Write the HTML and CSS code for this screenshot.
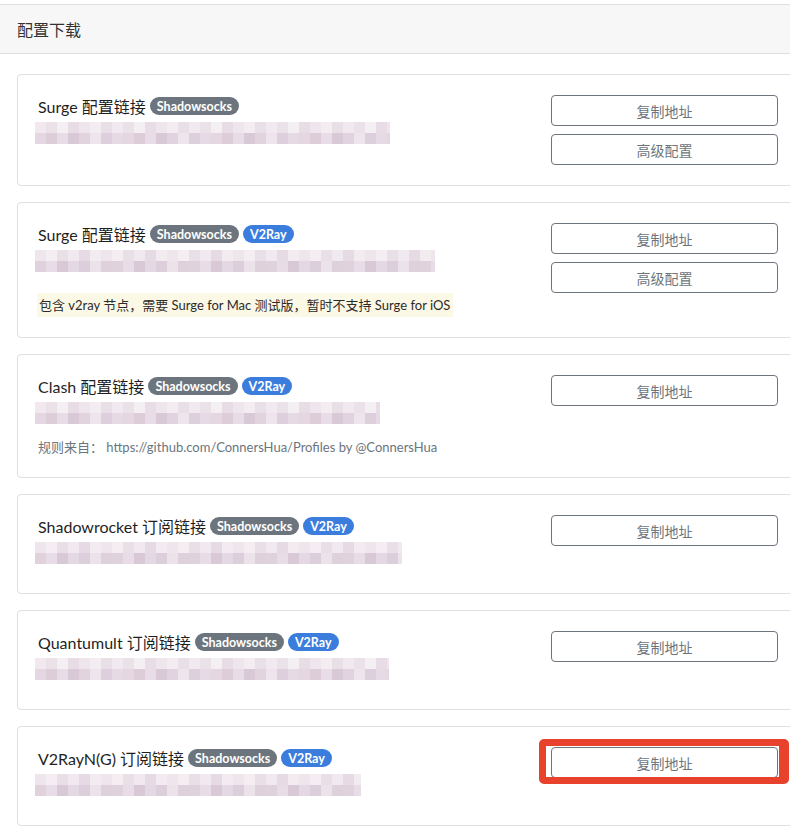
FILE: index.html
```html
<!DOCTYPE html>
<html lang="zh-CN">
<head>
<meta charset="utf-8">
<title>配置下载</title>
<link rel="stylesheet" href="styles.css">
</head>
<body>
<div class="panel">
  <div class="panel-head">配置下载</div>
  <div class="panel-body">

    <div class="card">
      <div class="card-main">
        <div class="title">Surge 配置链接 <span class="badge badge-ss">Shadowsocks</span></div>
        <div class="blur blur-a w355"></div>
      </div>
      <div class="card-actions">
        <button class="btn">复制地址</button>
        <button class="btn">高级配置</button>
      </div>
    </div>

    <div class="card">
      <div class="card-main">
        <div class="title">Surge 配置链接 <span class="badge badge-ss">Shadowsocks</span><span class="badge badge-v2">V2Ray</span></div>
        <div class="blur blur-b w400"></div>
        <div class="note-warn">包含 v2ray 节点，需要 Surge for Mac 测试版，暂时不支持 Surge for iOS</div>
      </div>
      <div class="card-actions">
        <button class="btn">复制地址</button>
        <button class="btn">高级配置</button>
      </div>
    </div>

    <div class="card">
      <div class="card-main">
        <div class="title">Clash 配置链接 <span class="badge badge-ss">Shadowsocks</span><span class="badge badge-v2">V2Ray</span></div>
        <div class="blur blur-a w345"></div>
        <div class="note-muted">规则来自：&nbsp;https://github.com/ConnersHua/Profiles by @ConnersHua</div>
      </div>
      <div class="card-actions">
        <button class="btn">复制地址</button>
      </div>
    </div>

    <div class="card">
      <div class="card-main">
        <div class="title">Shadowrocket 订阅链接 <span class="badge badge-ss">Shadowsocks</span><span class="badge badge-v2">V2Ray</span></div>
        <div class="blur blur-b w367"></div>
      </div>
      <div class="card-actions">
        <button class="btn">复制地址</button>
      </div>
    </div>

    <div class="card">
      <div class="card-main">
        <div class="title">Quantumult 订阅链接 <span class="badge badge-ss">Shadowsocks</span><span class="badge badge-v2">V2Ray</span></div>
        <div class="blur blur-a w354"></div>
      </div>
      <div class="card-actions">
        <button class="btn">复制地址</button>
      </div>
    </div>

    <div class="card">
      <div class="card-main">
        <div class="title">V2RayN(G) 订阅链接 <span class="badge badge-ss">Shadowsocks</span><span class="badge badge-v2">V2Ray</span></div>
        <div class="blur blur-b w326"></div>
      </div>
      <div class="card-actions">
        <div class="highlight-wrap">
          <button class="btn">复制地址</button>
          <span class="highlight"></span>
        </div>
      </div>
    </div>

  </div>
</div>
</body>
</html>
```

FILE: styles.css
```css
html, body {
  margin: 0;
  padding: 0;
  overflow: hidden;
  background: #ffffff;
}

body {
  font-family: Lato, "Noto Sans CJK SC", sans-serif;
  color: #2b2b2b;
}

.panel {
  margin-top: 4px;
  width: 830px;
  border-top: 1px solid #e0e0e0;
}

.panel-head {
  height: 48px;
  display: flex;
  align-items: center;
  padding-left: 17px;
  background: #f7f7f7;
  border-bottom: 1px solid #dfdfdf;
  font-size: 16px;
  color: #333333;
}

.panel-body {
  padding: 20px 0 0 17px;
}

.card {
  width: 782px;
  box-sizing: border-box;
  border: 1px solid #dfdfdf;
  border-radius: 4px;
  padding: 20px;
  display: flex;
  align-items: flex-start;
  margin-bottom: 16px;
}

.card-main {
  flex: 1;
  min-width: 0;
}

.card-actions {
  width: 227px;
  display: flex;
  flex-direction: column;
  gap: 8px;
}

.title {
  display: flex;
  align-items: center;
  height: 22px;
  font-size: 16px;
  color: #1f1f1f;
  white-space: nowrap;
}

.badge {
  display: inline-flex;
  align-items: center;
  height: 18px;
  padding: 0 7px;
  border-radius: 9px;
  font-size: 12.5px;
  font-weight: 700;
  color: #ffffff;
  margin-left: 4px;
}

.badge-ss {
  background: #6c757d;
}

.badge-v2 {
  background: #3b7ddd;
}

.blur {
  height: 22px;
  margin: 5px 0 9px -3px;
  background-repeat: no-repeat;
  background-size: 100% 50%, 100% 50%;
  background-position: left top, left bottom;
}

.blur-a {
  background-image:
    repeating-linear-gradient(90deg, #f1e9ef 0 11px, #ebe1e9 11px 22px, #f4eff3 22px 33px, #e8dde6 33px 44px, #efe6ed 44px 55px, #f3edf2 55px 66px, #e9dfe7 66px 77px),
    repeating-linear-gradient(90deg, #e4d7e2 0 11px, #dccdd9 11px 22px, #e8dde6 22px 33px, #d9c8d6 33px 44px, #e2d4df 44px 55px, #eee5ec 55px 66px, #ddcfdb 66px 77px, #e6dae4 77px 88px);
}

.blur-b {
  background-image:
    repeating-linear-gradient(90deg, #efe6ed 0 11px, #f4eef3 11px 22px, #e9dfe7 22px 33px, #f1e9f0 33px 44px, #e6dbe4 44px 55px, #f2ecf1 55px 66px),
    repeating-linear-gradient(90deg, #e0d2dd 0 11px, #e8dde6 11px 22px, #d9c9d6 22px 33px, #e4d8e2 33px 44px, #dccedA 44px 55px, #ebe2ea 55px 66px, #dfd1dc 66px 77px);
}

.w326 { width: 326px; }
.w345 { width: 345px; }
.w354 { width: 354px; }
.w355 { width: 355px; }
.w367 { width: 367px; }
.w400 { width: 400px; }

.note-warn {
  display: inline-block;
  margin-top: 12px;
  height: 24px;
  line-height: 24px;
  padding: 0 3px 0 2px;
  margin-left: -1px;
  background: #fcf8e6;
  font-size: 13px;
  color: #2b2b2b;
  white-space: nowrap;
}

.note-muted {
  margin-top: 13px;
  height: 20px;
  line-height: 20px;
  font-size: 13px;
  color: #6c757d;
  white-space: nowrap;
}

.btn {
  display: block;
  width: 227px;
  height: 31px;
  box-sizing: border-box;
  border: 1px solid #6c757d;
  border-radius: 4px;
  background: #ffffff;
  font-family: Lato, "Noto Sans CJK SC", sans-serif;
  font-size: 14px;
  color: #6c757d;
  padding: 0;
  cursor: pointer;
}

.highlight-wrap {
  position: relative;
}

.highlight {
  position: absolute;
  left: -12px;
  top: -8px;
  width: 250px;
  height: 45px;
  box-sizing: border-box;
  border-style: solid;
  border-color: #e8412c;
  border-width: 7px 10px 7px 7px;
  border-radius: 5px;
  pointer-events: none;
}
```
